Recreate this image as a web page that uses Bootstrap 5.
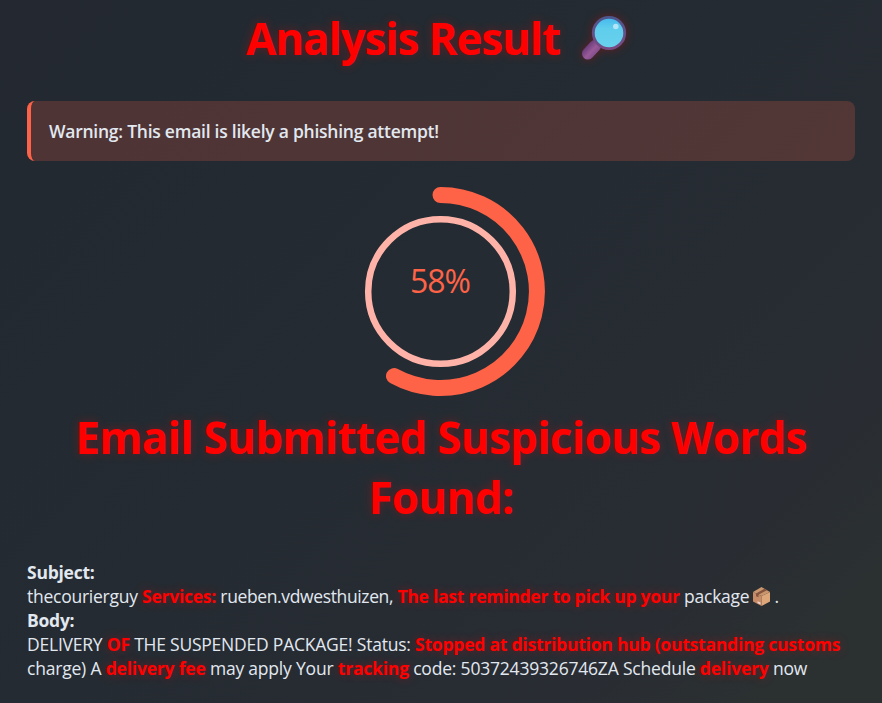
<!DOCTYPE html>
<html lang="en">
<head>
<meta charset="utf-8">
<meta name="viewport" content="width=device-width, initial-scale=1">
<title>Analysis Result</title>
<link href="https://cdn.jsdelivr.net/npm/bootstrap@5.3.0/dist/css/bootstrap.min.css" rel="stylesheet">
<style>
  html { height: 100%; }
  body {
    min-height: 100%;
    background: linear-gradient(135deg, #232831 0%, #232a31 28%, #272c33 65%, #292d33 80%, #2b3031 92%, #2b3031 100%) no-repeat;
    color: #e2e8f0;
    font-family: "Segoe UI", "Open Sans", "Noto Sans", sans-serif;
    font-size: 17.5px;
    line-height: 24px;
    letter-spacing: -.25px;
    overflow: hidden;
  }
  .page-wrap { padding: 8px 27px 0; }
  .glow-title {
    color: #f00;
    font-size: 44px;
    line-height: 60px;
    font-weight: 700;
    text-shadow: 0 0 10px rgba(255, 0, 0, .3);
    letter-spacing: -.74px;
  }
  .result-title { letter-spacing: -1.15px; margin-bottom: 33px; padding-left: 219px; }
  .found-title { margin-bottom: 33px; }
  .lens { filter: drop-shadow(0 0 4px rgba(255, 0, 0, .3)); margin-left: 21px; }
  .alert-phish {
    background: rgba(255, 99, 71, .2);
    border: 0;
    border-left: 4px solid #ff6347;
    border-radius: 8px;
    color: #e2e8f0;
    font-weight: 600;
    padding: 18px 18px;
    margin-bottom: 21px;
  }
  .ring { height: 225px; }
  .ring text { font-size: 32px; letter-spacing: -1px; fill: #ff6347; }
  .mail-text { white-space: nowrap; }
  .flagged { color: #f00; font-weight: 700; text-shadow: 0 0 10px rgba(255, 0, 0, .35); }
  .parcel { vertical-align: -3px; margin: 0 4px; }
  .snug { letter-spacing: -.37px; }
  .status-line { letter-spacing: -.225px; }
  .charge-line { letter-spacing: -.2px; }
</style>
</head>
<body>
<main class="page-wrap">
  <h1 class="glow-title result-title d-flex align-items-center">
    <span>Analysis Result</span>
    <svg class="lens" width="46" height="46" viewBox="0 0 46 46" aria-hidden="true">
      <defs>
        <linearGradient id="handle" x1="0" y1="0" x2="1" y2="1"><stop offset="0" stop-color="#70417e"/><stop offset=".6" stop-color="#995a98"/><stop offset="1" stop-color="#87508f"/></linearGradient>
        <linearGradient id="rim" x1="0" y1="0" x2="0" y2="1"><stop offset="0" stop-color="#4d578d"/><stop offset="1" stop-color="#794a82"/></linearGradient>
        <linearGradient id="glass" x1="0" y1="0" x2="0" y2="1"><stop offset="0" stop-color="#43b8ee"/><stop offset=".35" stop-color="#5fcdec"/><stop offset="1" stop-color="#69d2ee"/></linearGradient>
      </defs>
      <path d="M7 38.5 14 31" stroke="url(#handle)" stroke-width="12" stroke-linecap="round"/>
      <circle cx="28" cy="18" r="15.7" fill="url(#glass)" stroke="url(#rim)" stroke-width="2.8"/>
      <circle cx="34.8" cy="11.5" r="2.8" fill="#b4e4f8"/>
    </svg>
  </h1>

  <div class="alert alert-phish" role="alert">Warning: This email is likely a phishing attempt!</div>

  <div class="ring d-flex justify-content-center">
    <svg width="220" height="219" viewBox="0 0 220 219" role="img" aria-label="58%">
      <circle cx="109.5" cy="109.5" r="72.3" fill="none" stroke="#ffb3a8" stroke-width="6.5"/>
      <path d="M109.5 13A96.5 96.5 0 1 1 63 194.1" fill="none" stroke="#ff6347" stroke-width="16" stroke-linecap="round"/>
      <text x="109" y="111" text-anchor="middle">58%</text>
    </svg>
  </div>

  <h2 class="glow-title found-title text-center">Email Submitted Suspicious Words Found:</h2>

  <div class="mail-text">
    <div><strong>Subject:</strong></div>
    <div>thecourierguy <span class="flagged">Services:</span> <span class="snug">rueben.vdwesthuizen,</span> <span class="flagged">The last reminder to pick up your</span> package<svg class="parcel" width="17" height="19" viewBox="0 0 17 19" aria-hidden="true"><path d="M0 5 8.5 9v10L0 14.5z" fill="#c78b65"/><path d="M17 5 8.5 9v10L17 14.5z" fill="#dda779"/><path d="M8.5 0 17 5 8.5 9 0 5z" fill="#c9966e"/><path d="M3 6.4 11.4 1.7 14 3.2 5.5 7.7v2.6L3 9.2z" fill="#85543f"/><path d="M4.5 14.2 7.5 15.6v2L4.5 16z" fill="#edd3d8"/></svg>.</div>
    <div><strong>Body:</strong></div>
    <div class="status-line">DELIVERY <span class="flagged">OF</span> THE SUSPENDED PACKAGE! Status: <span class="flagged">Stopped at distribution hub (outstanding customs</span></div>
    <div class="charge-line">charge) A <span class="flagged">delivery fee</span> may apply Your <span class="flagged">tracking</span> code: 50372439326746ZA Schedule <span class="flagged">delivery</span> now</div>
  </div>
</main>
<script src="https://cdn.jsdelivr.net/npm/bootstrap@5.3.0/dist/js/bootstrap.bundle.min.js"></script>
</body>
</html>
